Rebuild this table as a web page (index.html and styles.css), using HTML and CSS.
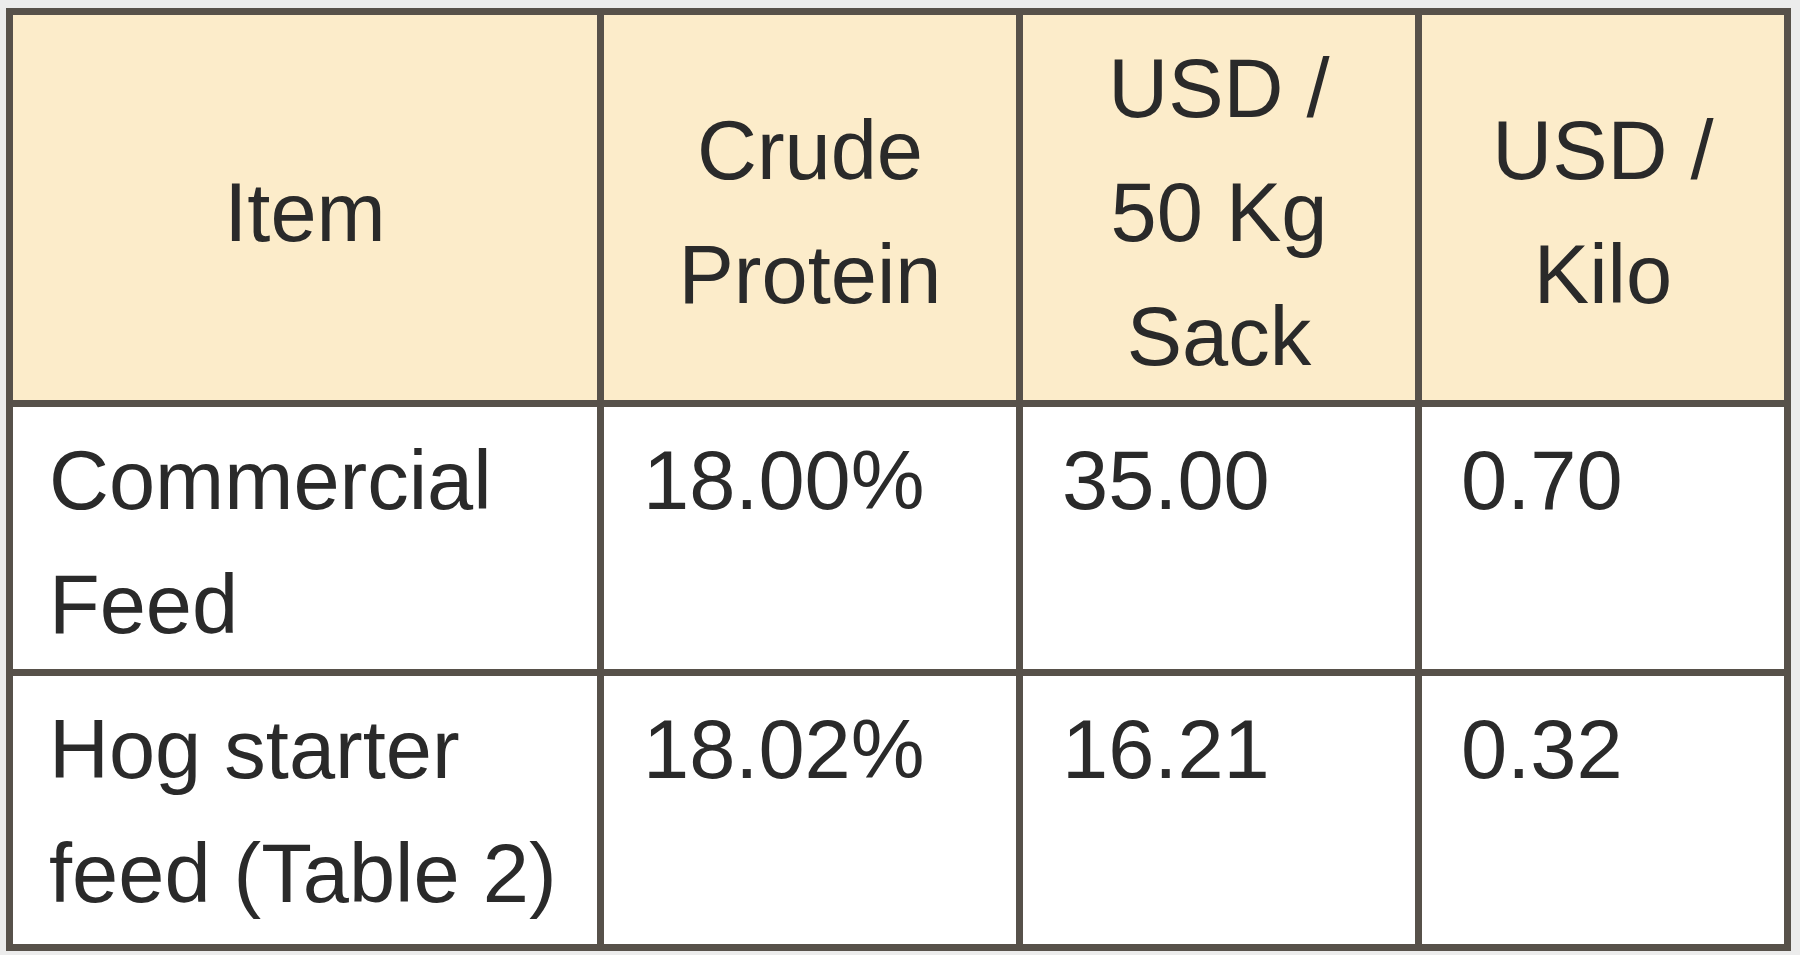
FILE: index.html
```html
<!DOCTYPE html>
<html lang="en">
<head>
<meta charset="utf-8">
<title>Feed cost comparison</title>
<link rel="stylesheet" href="styles.css">
</head>
<body>
<table class="feed-table">
  <thead>
    <tr class="head-row">
      <th class="c1">Item</th>
      <th class="c2">Crude Protein</th>
      <th class="c3">USD / 50 Kg Sack</th>
      <th class="c4">USD / Kilo</th>
    </tr>
  </thead>
  <tbody>
    <tr class="row-a">
      <td>Commercial Feed</td>
      <td class="num">18.00%</td>
      <td class="num">35.00</td>
      <td class="num">0.70</td>
    </tr>
    <tr class="row-b">
      <td>Hog starter feed (Table 2)</td>
      <td class="num">18.02%</td>
      <td class="num">16.21</td>
      <td class="num">0.32</td>
    </tr>
  </tbody>
</table>
</body>
</html>
```
FILE: styles.css
```css
html, body {
  margin: 0;
  padding: 0;
  background: #ececec;
}

body {
  padding: 8px 0 0 6px;
  font-family: "Liberation Sans", Arial, sans-serif;
  color: #2a2a2a;
}

.feed-table {
  width: 1785px;
  table-layout: fixed;
  border-collapse: separate;
  border-spacing: 0;
  border-left: 7px solid #57514a;
  border-top: 7px solid #57514a;
  background: #ffffff;
  font-size: 83px;
  line-height: 124px;
}

.feed-table th,
.feed-table td {
  box-sizing: border-box;
  border-right: 7px solid #57514a;
  border-bottom: 7px solid #57514a;
  padding: 0;
}

.feed-table th {
  background: #fcecca;
  font-weight: normal;
  text-align: center;
  vertical-align: middle;
  padding: 10px 36px 0 36px;
  height: 392px;
}

.c1 { width: 591px; }
.c2 { width: 419px; }
.c3 { width: 399px; }
.c4 { width: 369px; }

.feed-table td {
  text-align: left;
  vertical-align: top;
  padding: 12px 16px 0 36px;
}

.feed-table td.num {
  padding-left: 39px;
}

.row-a td { height: 269px; }
.row-b td { height: 275px; }
```
